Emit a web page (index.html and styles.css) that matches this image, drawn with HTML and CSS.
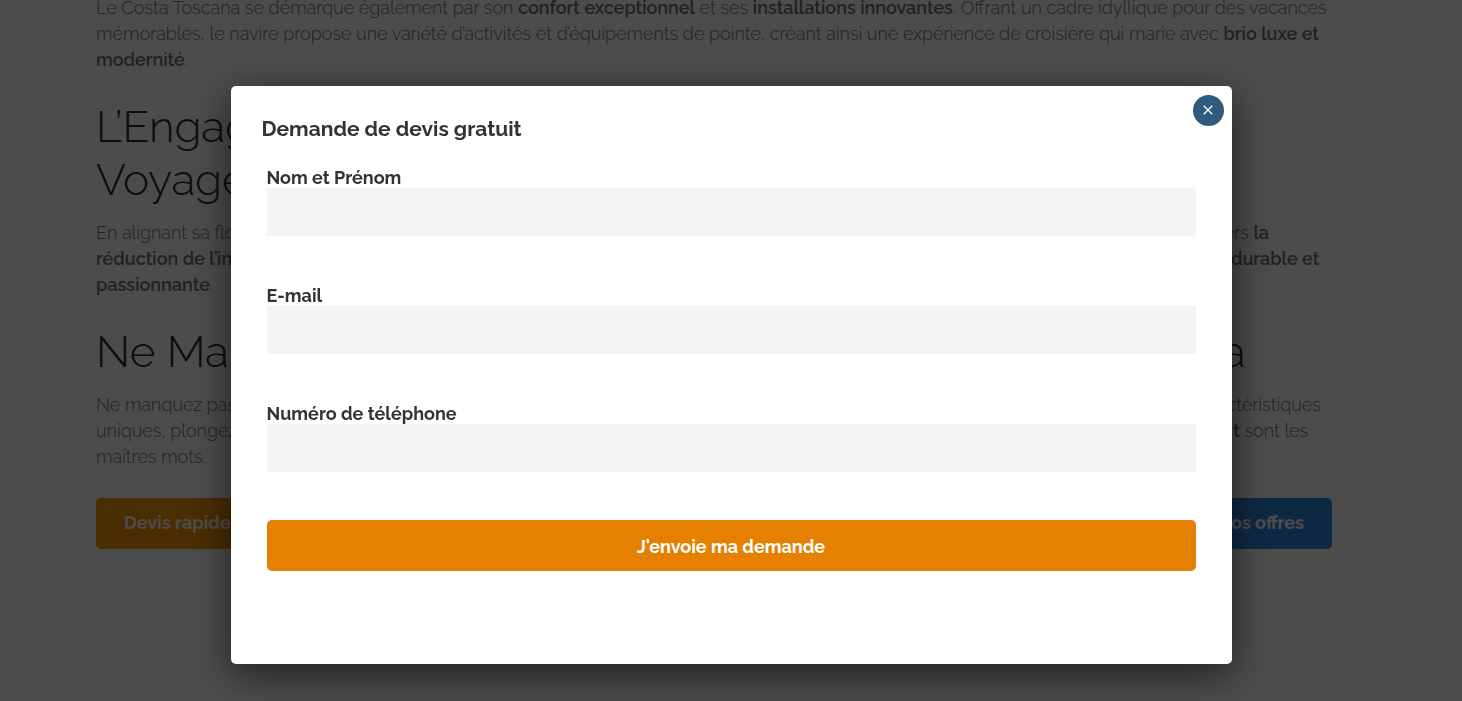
FILE: index.html
```html
<!DOCTYPE html>
<html lang="fr">
<head>
<meta charset="utf-8">
<meta name="viewport" content="width=device-width, initial-scale=1">
<title>Demande de devis gratuit</title>
<link rel="stylesheet" href="styles.css">
</head>
<body>
<main class="article">
  <p>Le Costa Toscana se démarque également par son <strong>confort exceptionnel</strong> et ses <strong>installations innovantes</strong>. Offrant un cadre idyllique pour des vacances<br>mémorables, le navire propose une variété d’activités et d’équipements de pointe, créant ainsi une expérience de croisière qui marie avec <strong>brio luxe et<br>modernité</strong>.</p>
  <h2>L’Engagement de Costa Croisières pour un<br>Voyage Responsable</h2>
  <p>En alignant sa flotte sur des normes environnementales strictes, le Costa Toscana incarne ainsi un pas de plus de la compagnie italienne vers <strong>la<br>réduction de l’impact environnemental et offre à tous ses passagers une véritable expérience de croisière à la fois plus respectueuse, durable et<br>passionnante</strong>.</p>
  <h2>Ne Manquez Pas l’Expérience Magique du Costa Toscana</h2>
  <p>Ne manquez pas l’opportunité de découvrir le Costa Toscana, un navire hors du commun. Avec son design soigné et ses nombreuses caractéristiques<br>uniques, plongez dans une aventure en mer exceptionnelle à bord de ce grand navire où <strong>le luxe, le confort, la détente et l’émerveillement</strong> sont les<br>maîtres mots.</p>
  <div class="actions">
    <a class="btn btn-orange" href="#devis">Devis rapide</a>
    <a class="btn btn-blue" href="#offres">Voir nos offres</a>
  </div>
</main>
<div class="overlay">
  <section class="modal" role="dialog" aria-modal="true" aria-labelledby="modal-title">
    <button class="close" type="button" aria-label="Fermer">
      <svg viewBox="0 0 10 10" width="10" height="10" aria-hidden="true"><path d="M.7.7l8.6 8.6M9.3.7L.7 9.3" fill="none" stroke="currentColor" stroke-width="1.3"/></svg>
    </button>
    <h3 id="modal-title">Demande de devis gratuit</h3>
    <form class="form">
      <div class="field"><label for="nom">Nom et Prénom</label><input id="nom" type="text"></div>
      <div class="field"><label for="email">E-mail</label><input id="email" type="email"></div>
      <div class="field"><label for="tel">Numéro de téléphone</label><input id="tel" type="tel"></div>
      <button class="btn submit" type="submit">J'envoie ma demande</button>
    </form>
  </section>
</div>
</body>
</html>
```
FILE: styles.css
```css
* { box-sizing: border-box; }
body {
  margin: 0;
  height: 100vh;
  overflow: hidden;
  background: #fff;
  color: #6e6e6e;
  font-family: Raleway, Lato, "Open Sans", sans-serif;
  font-size: 18px;
  line-height: 26px;
}
.article { padding: 0 130px 0 96px; margin-top: -5px; white-space: nowrap; }
.article p { margin: 0; font-weight: 300; }
.article strong { font-weight: 600; }
.article h2 {
  margin: 27px 0 14px;
  color: #262b33;
  font-size: 44px;
  font-weight: 300;
  line-height: 53px;
}
.actions { display: flex; justify-content: space-between; margin-top: 28px; }
.btn {
  height: 51px;
  padding: 0 28px;
  border: 0;
  border-radius: 5px;
  color: #fff;
  font: inherit;
  font-weight: 700;
  line-height: 50px;
  text-decoration: none;
}
.btn-orange { width: 200px; background: #f99600; }
.btn-blue { background: #2f89e3; }
.overlay {
  position: fixed;
  inset: 0;
  display: flex;
  justify-content: center;
  align-items: flex-start;
  padding: 86px 16px 16px;
  background: rgba(0, 0, 0, .7);
}
.modal {
  position: relative;
  width: 100%;
  max-width: 1001px;
  padding: 30px 36px 93px;
  border-radius: 5px;
  background: #fff;
  color: #333;
  box-shadow: 0 10px 40px rgba(0, 0, 0, .6);
}
.modal h3 { margin: 0 -5px 24px; font-size: 21px; font-weight: 700; line-height: 26px; }
.form { display: flex; flex-direction: column; gap: 48px; }
.field { display: flex; flex-direction: column; }
.field label { padding-top: 2px; font-weight: 700; line-height: 20px; }
.field input { height: 48px; border: 0; padding: 0 12px; background: #f4f4f4; font: inherit; }
.submit { padding-top: 2px; line-height: 26px; background: #e58000; }
.close {
  position: absolute;
  top: 9px;
  right: 8px;
  display: flex;
  justify-content: center;
  align-items: center;
  width: 31px;
  height: 31px;
  padding: 0 0 2px;
  border: 0;
  border-radius: 50%;
  background: #315b7c;
  color: #fff;
}
```
